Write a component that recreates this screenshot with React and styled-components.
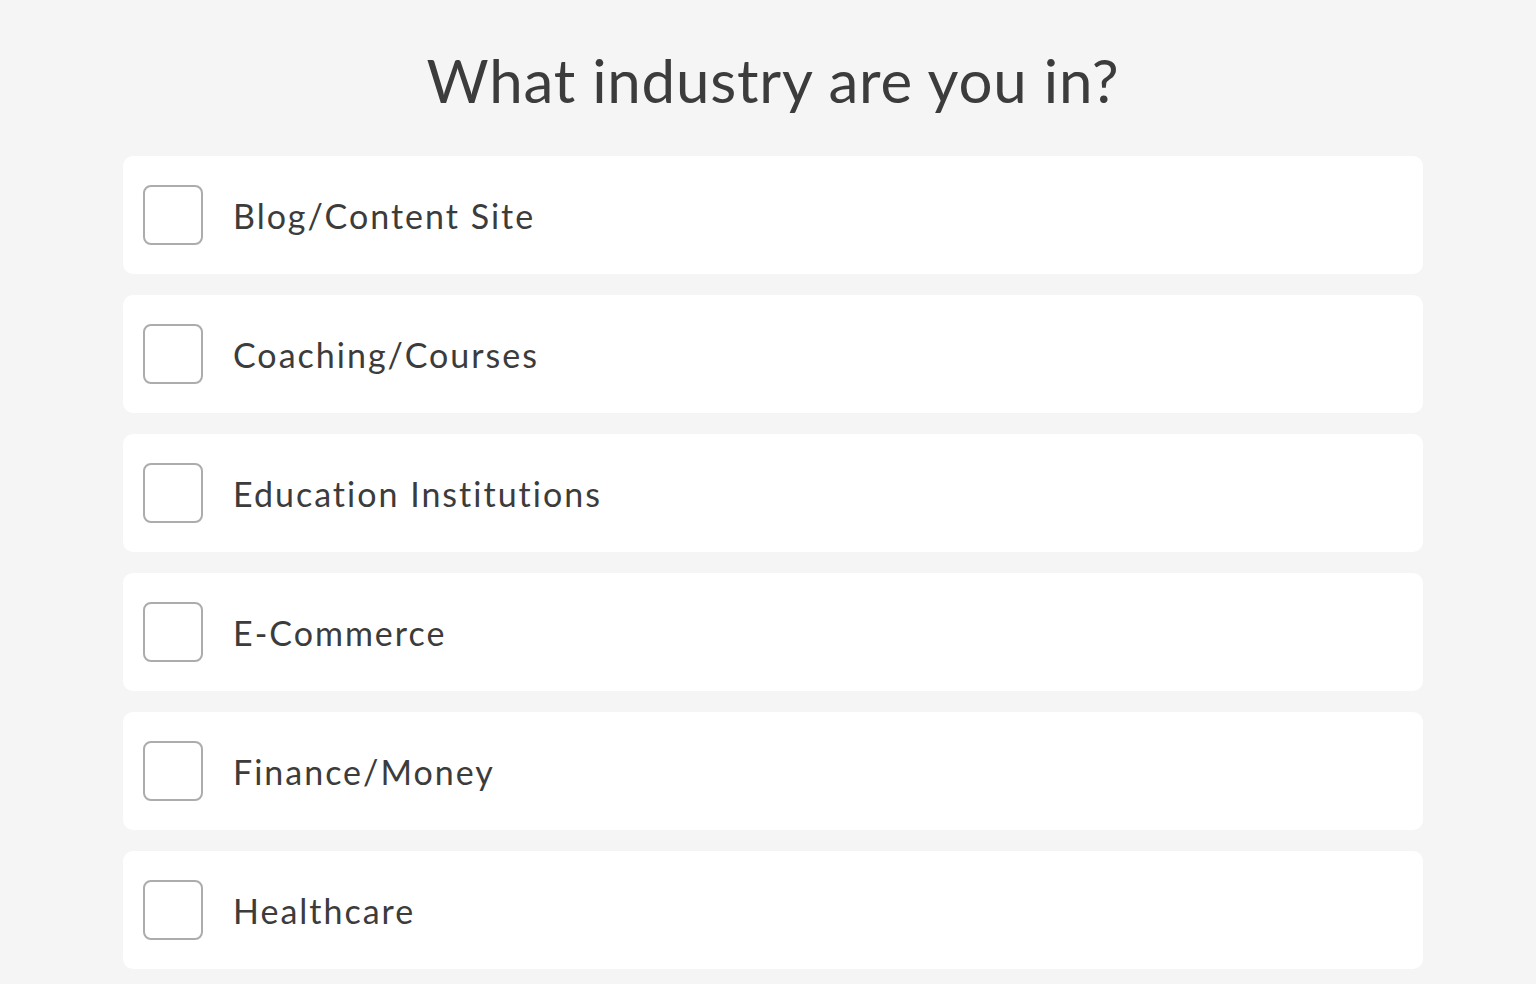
import React from "react";
import styled, { createGlobalStyle } from "styled-components";

const GlobalStyle = createGlobalStyle`
  body {
    margin: 0;
    background: #f4f5f4;
    font-family: Lato, "Noto Sans", sans-serif;
    color: #3b3c3b;
  }
`;

const industries = [
  "Blog/Content Site",
  "Coaching/Courses",
  "Education Institutions",
  "E-Commerce",
  "Finance/Money",
  "Healthcare",
];

function App() {
  return (
    <Page>
      <GlobalStyle />
      <Title>What industry are you in?</Title>
      <List>
        {industries.map((name) => (
          <Option key={name}>
            <Box />
            <Label>{name}</Label>
          </Option>
        ))}
      </List>
    </Page>
  );
}

export default App;

const Page = styled.div`
  height: 984px;
  overflow: hidden;
  box-sizing: border-box;
  padding-left: 10px;
  display: flex;
  flex-direction: column;
  align-items: center;
`;

const Title = styled.h1`
  margin: 42px 0 0;
  height: 76px;
  font-size: 60px;
  line-height: 76px;
  font-weight: 400;
  letter-spacing: 0.8px;
`;

const List = styled.div`
  margin-top: 38px;
  width: 1300px;
  display: flex;
  flex-direction: column;
  gap: 21px;
`;

const Option = styled.label`
  height: 118px;
  box-sizing: border-box;
  background: #ffffff;
  border-radius: 10px;
  display: flex;
  align-items: center;
  padding: 0 20px;
  gap: 30px;
  cursor: pointer;
`;

const Box = styled.span`
  width: 60px;
  height: 60px;
  box-sizing: border-box;
  border: 2px solid #acacac;
  border-radius: 8px;
  flex-shrink: 0;
`;

const Label = styled.span`
  font-size: 34px;
  letter-spacing: 2px;
`;
